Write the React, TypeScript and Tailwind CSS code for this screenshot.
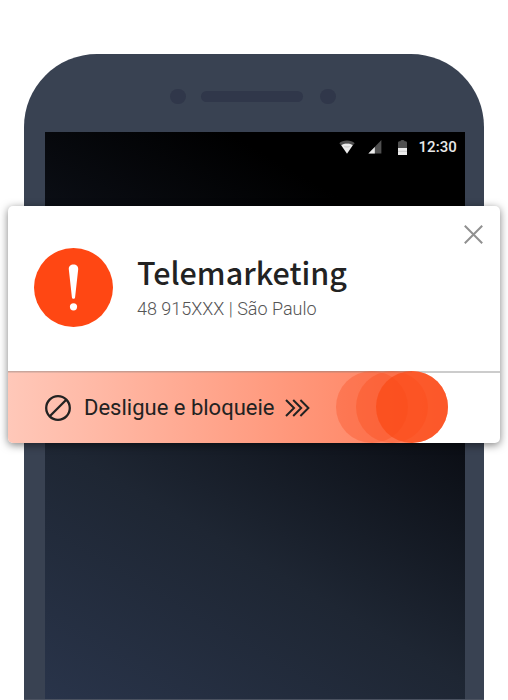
import React from "react";

function StatusBar() {
  return (
    <div className="flex h-[30px] items-center justify-end pr-2 text-[#e8e8e8]">
      <svg width="16" height="14" viewBox="0 0 16 14" className="mr-[13px]">
        <path d="M0.3 3.2C2 1.4 4.8.4 8 .4s6 1 7.7 2.8L13.8 5.3C9.5 2.9 6 2.9 2.2 5.3z" fill="#505050" />
        <path d="M2.2 5.3C4.6 2.9 11.4 2.9 13.8 5.3L8 13.7z" fill="#ececec" />
        <path d="M5.4 6.6c1.6.5 3.6.5 5.2 0" stroke="#bbb" strokeWidth=".8" fill="none" />
      </svg>
      <svg width="14" height="14" viewBox="0 0 14 14" className="mr-4">
        <path d="M13.4 0V13.6H.4z" fill="#505050" />
        <path d="M6.8 6.9V13.6H.4z" fill="#ececec" />
      </svg>
      <svg width="9" height="15" viewBox="0 0 9 15" className="mr-[11px]">
        <path d="M0 2.6Q0 1.4 1.2 1.2H2.3Q2.5 0 4.5 0t2.2 1.2H7.8Q9 1.4 9 2.6V8H0z" fill="#505050" />
        <path d="M0 8h9v7H0z" fill="#ececec" />
        <path d="M0 11.3h9" stroke="#bbb" strokeWidth=".7" />
      </svg>
      <span className="text-[15px] font-medium leading-none tracking-[0.1px]">12:30</span>
    </div>
  );
}

function Phone() {
  return (
    <div className="mx-6 flex h-[646px] w-[460px] flex-col rounded-t-[73px] bg-[#394252]">
      <div className="flex h-[78px] items-center pl-[146px] pt-[7px]">
        <span className="h-[15px] w-4 rounded-full bg-[#30374a]" />
        <span className="ml-[15px] h-[11px] w-[102px] rounded-full bg-[#30374a]" />
        <span className="ml-[17px] h-[15px] w-4 rounded-full bg-[#30374a]" />
      </div>
      <div className="ml-[21px] h-[567px] w-[420px] bg-[linear-gradient(210deg,#000_17%,#0b0e15_39%,#1e2633_68%,#29344a_100%)]">
        <StatusBar />
      </div>
      <div className="h-px bg-[#4b5260]" />
    </div>
  );
}

function CallCard() {
  return (
    <section className="absolute left-2 top-[206px] flex h-[237px] w-[492px] flex-col rounded-[5px] bg-white shadow-[0_2px_8px_rgba(0,0,0,0.5)]">
      <div className="flex h-[165px] pl-[26px] pt-[42px]">
        <svg width="79" height="79" viewBox="0 0 79 79">
          <circle cx="39.5" cy="39.5" r="39.5" fill="#ff4713" />
          <path d="M39.5 16.5c2.9 0 4.9 1.9 4.7 4.7L41.1 49.3c-.2 2-3 2-3.2 0L34.8 21.2c-.2-2.8 1.8-4.7 4.7-4.7z" fill="#fff" />
          <circle cx="39.5" cy="58.8" r="3.6" fill="#fff" />
        </svg>
        <div className="ml-6 pt-1">
          <h1 className="font-['Noto_Sans_CJK_SC',sans-serif] text-[30.5px] font-medium leading-10 text-[#222]">Telemarketing</h1>
          <p className="pt-1 text-[18px] font-light leading-[25px] text-[#555]">48 915XXX | São Paulo</p>
        </div>
        <svg width="19" height="19" viewBox="0 0 19 19" className="-mt-[23px] ml-auto mr-[17px]">
          <path d="M.8.8l17.4 17.4M18.2.8L.8 18.2" stroke="#909090" strokeWidth="2" />
        </svg>
      </div>
      <div className="relative flex h-[72px] items-center overflow-hidden rounded-b-[5px]">
        <svg width="492" height="72" viewBox="0 0 492 72" className="absolute inset-0">
          <defs>
            <linearGradient id="trail">
              <stop offset="0" stopColor="#ffc8b9" />
              <stop offset="1" stopColor="#ff7c58" />
            </linearGradient>
          </defs>
          <path d="M0 0H492V2H0z" fill="#ccc" />
          <path d="M0 0H404a36 36 0 0 1 0 72H0z" fill="url(#trail)" />
          <path d="M0 0H404V1.6H0z" fill="#777" opacity=".4" />
          <circle cx="364" cy="36" r="36" fill="#f94818" opacity=".32" />
          <circle cx="384" cy="36" r="36" fill="#f94818" opacity=".34" />
          <circle cx="404" cy="36" r="36" fill="#fb4816" opacity=".7" />
        </svg>
        <div className="relative flex items-center pl-[37px] pt-px text-[#222]">
          <svg width="26" height="26" viewBox="0 0 26 26">
            <circle cx="13" cy="13" r="11.8" fill="none" stroke="#222" strokeWidth="2.3" />
            <path d="M5 21L21 5" stroke="#222" strokeWidth="2.3" />
          </svg>
          <span className="ml-[13px] text-[22px] leading-none">Desligue e bloqueie</span>
          <svg width="25" height="18" viewBox="0 0 25 18" className="ml-[10.5px]" fill="none" stroke="#222" strokeWidth="2">
            <path d="M1 1l8 8-8 8M8.2 1l8 8-8 8M15.4 1l8 8-8 8" />
          </svg>
        </div>
      </div>
    </section>
  );
}

export default function App() {
  return (
    <main className="relative h-[700px] w-[508px] overflow-hidden bg-white pt-[54px] font-['Roboto',sans-serif]">
      <Phone />
      <CallCard />
    </main>
  );
}
